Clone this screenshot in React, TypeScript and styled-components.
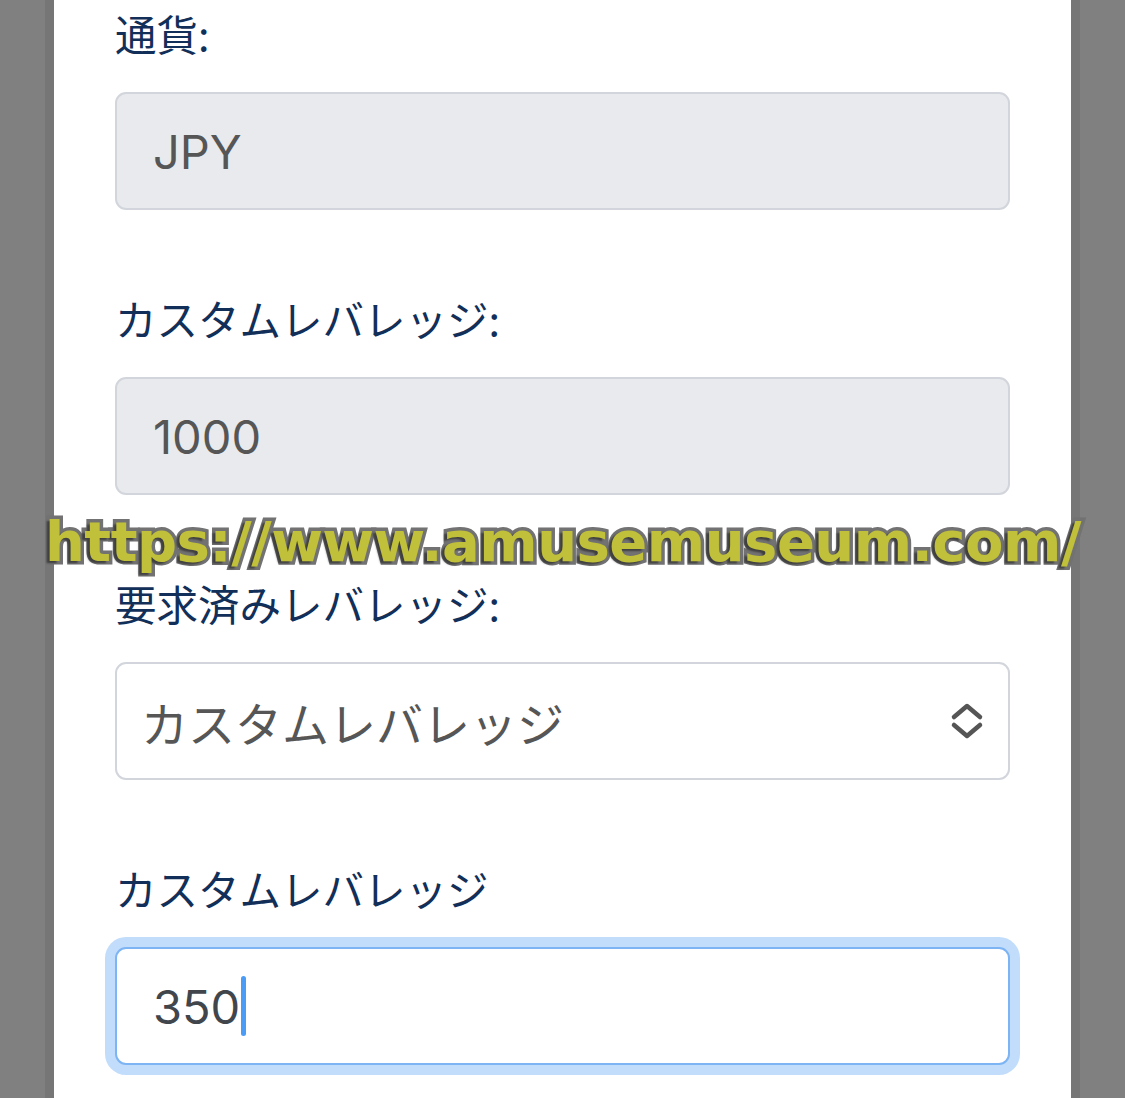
import styled, { createGlobalStyle } from 'styled-components';

const GlobalStyle = createGlobalStyle`
  html, body {
    margin: 0;
    padding: 0;
    background: #808080;
    overflow: hidden;
  }
  body {
    font-family: "Noto Sans CJK JP", "Noto Sans", sans-serif;
  }
`;

type BoxVariant = 'disabled' | 'select' | 'focused';

interface FieldProps {
  label: string;
  value: string;
  variant: BoxVariant;
}

function Chevrons() {
  return (
    <svg width="34" height="38" viewBox="0 0 34 38" fill="none">
      <path d="M4 15 L17 4 L30 15" stroke="#555" strokeWidth="4.5" strokeLinecap="round" strokeLinejoin="round" />
      <path d="M4 23 L17 34 L30 23" stroke="#555" strokeWidth="4.5" strokeLinecap="round" strokeLinejoin="round" />
    </svg>
  );
}

function Field({ label, value, variant }: FieldProps) {
  return (
    <FieldRoot>
      <Label>{label}</Label>
      <Box $variant={variant}>
        <BoxText $variant={variant}>{value}</BoxText>
        {variant === 'focused' && <Caret />}
        {variant === 'select' && (
          <ChevronSlot>
            <Chevrons />
          </ChevronSlot>
        )}
      </Box>
    </FieldRoot>
  );
}

export default function App() {
  return (
    <>
      <GlobalStyle />
      <Page>
        <Panel>
          <Field label="通貨:" value="JPY" variant="disabled" />
          <Field label="カスタムレバレッジ:" value="1000" variant="disabled" />
          <Field label="要求済みレバレッジ:" value="カスタムレバレッジ" variant="select" />
          <Field label="カスタムレバレッジ" value="350" variant="focused" />
        </Panel>
        <Watermark>https://www.amusemuseum.com/</Watermark>
      </Page>
    </>
  );
}

const Page = styled.div`
  position: relative;
  height: 1098px;
  display: flex;
  justify-content: center;
`;

const Panel = styled.div`
  width: 1017px;
  height: 1098px;
  box-sizing: border-box;
  background: #fff;
  box-shadow: 0 0 0 9px #767676;
  padding: 10px 61px 0 61px;
  display: flex;
  flex-direction: column;
  gap: 85px;
`;

const FieldRoot = styled.div`
  display: flex;
  flex-direction: column;
  gap: 36px;
`;

const Label = styled.div`
  font-size: 41.5px;
  line-height: 46px;
  height: 46px;
  color: #122f59;
  white-space: nowrap;
`;

const Box = styled.div<{ $variant: BoxVariant }>`
  position: relative;
  height: 118px;
  box-sizing: border-box;
  border-radius: 11px;
  display: flex;
  align-items: center;
  border: 2px solid ${({ $variant }) => ($variant === 'focused' ? '#7db4f4' : '#d2d5db')};
  background: ${({ $variant }) => ($variant === 'disabled' ? '#e8eaee' : '#fff')};
  padding-left: ${({ $variant }) => ($variant === 'select' ? '24px' : '36px')};
  box-shadow: ${({ $variant }) => ($variant === 'focused' ? '0 0 0 10px #c2ddfc' : 'none')};
`;

const BoxText = styled.span<{ $variant: BoxVariant }>`
  font-family: ${({ $variant }) =>
    $variant === 'select' ? '"Noto Sans CJK JP", sans-serif' : 'Inter, "Noto Sans", sans-serif'};
  font-size: 47px;
  color: ${({ $variant }) => ($variant === 'focused' ? '#41464d' : '#565656')};
  line-height: 1;
`;

const Caret = styled.span`
  display: inline-block;
  width: 5px;
  height: 60px;
  border-radius: 3px;
  background: #4a9cf6;
  margin-left: 1px;
`;

const ChevronSlot = styled.div`
  margin-left: auto;
  margin-right: 24px;
  display: flex;
`;

const Watermark = styled.div`
  position: absolute;
  left: 45px;
  top: 507px;
  font-family: "DejaVu Sans", sans-serif;
  font-weight: bold;
  font-size: 56px;
  line-height: 70px;
  letter-spacing: -0.5px;
  color: #c0c03a;
  -webkit-text-stroke: 7px #727272;
  paint-order: stroke fill;
  text-shadow: -3px 2px 2px rgba(0, 0, 0, 0.45);
  white-space: nowrap;
  pointer-events: none;
`;
